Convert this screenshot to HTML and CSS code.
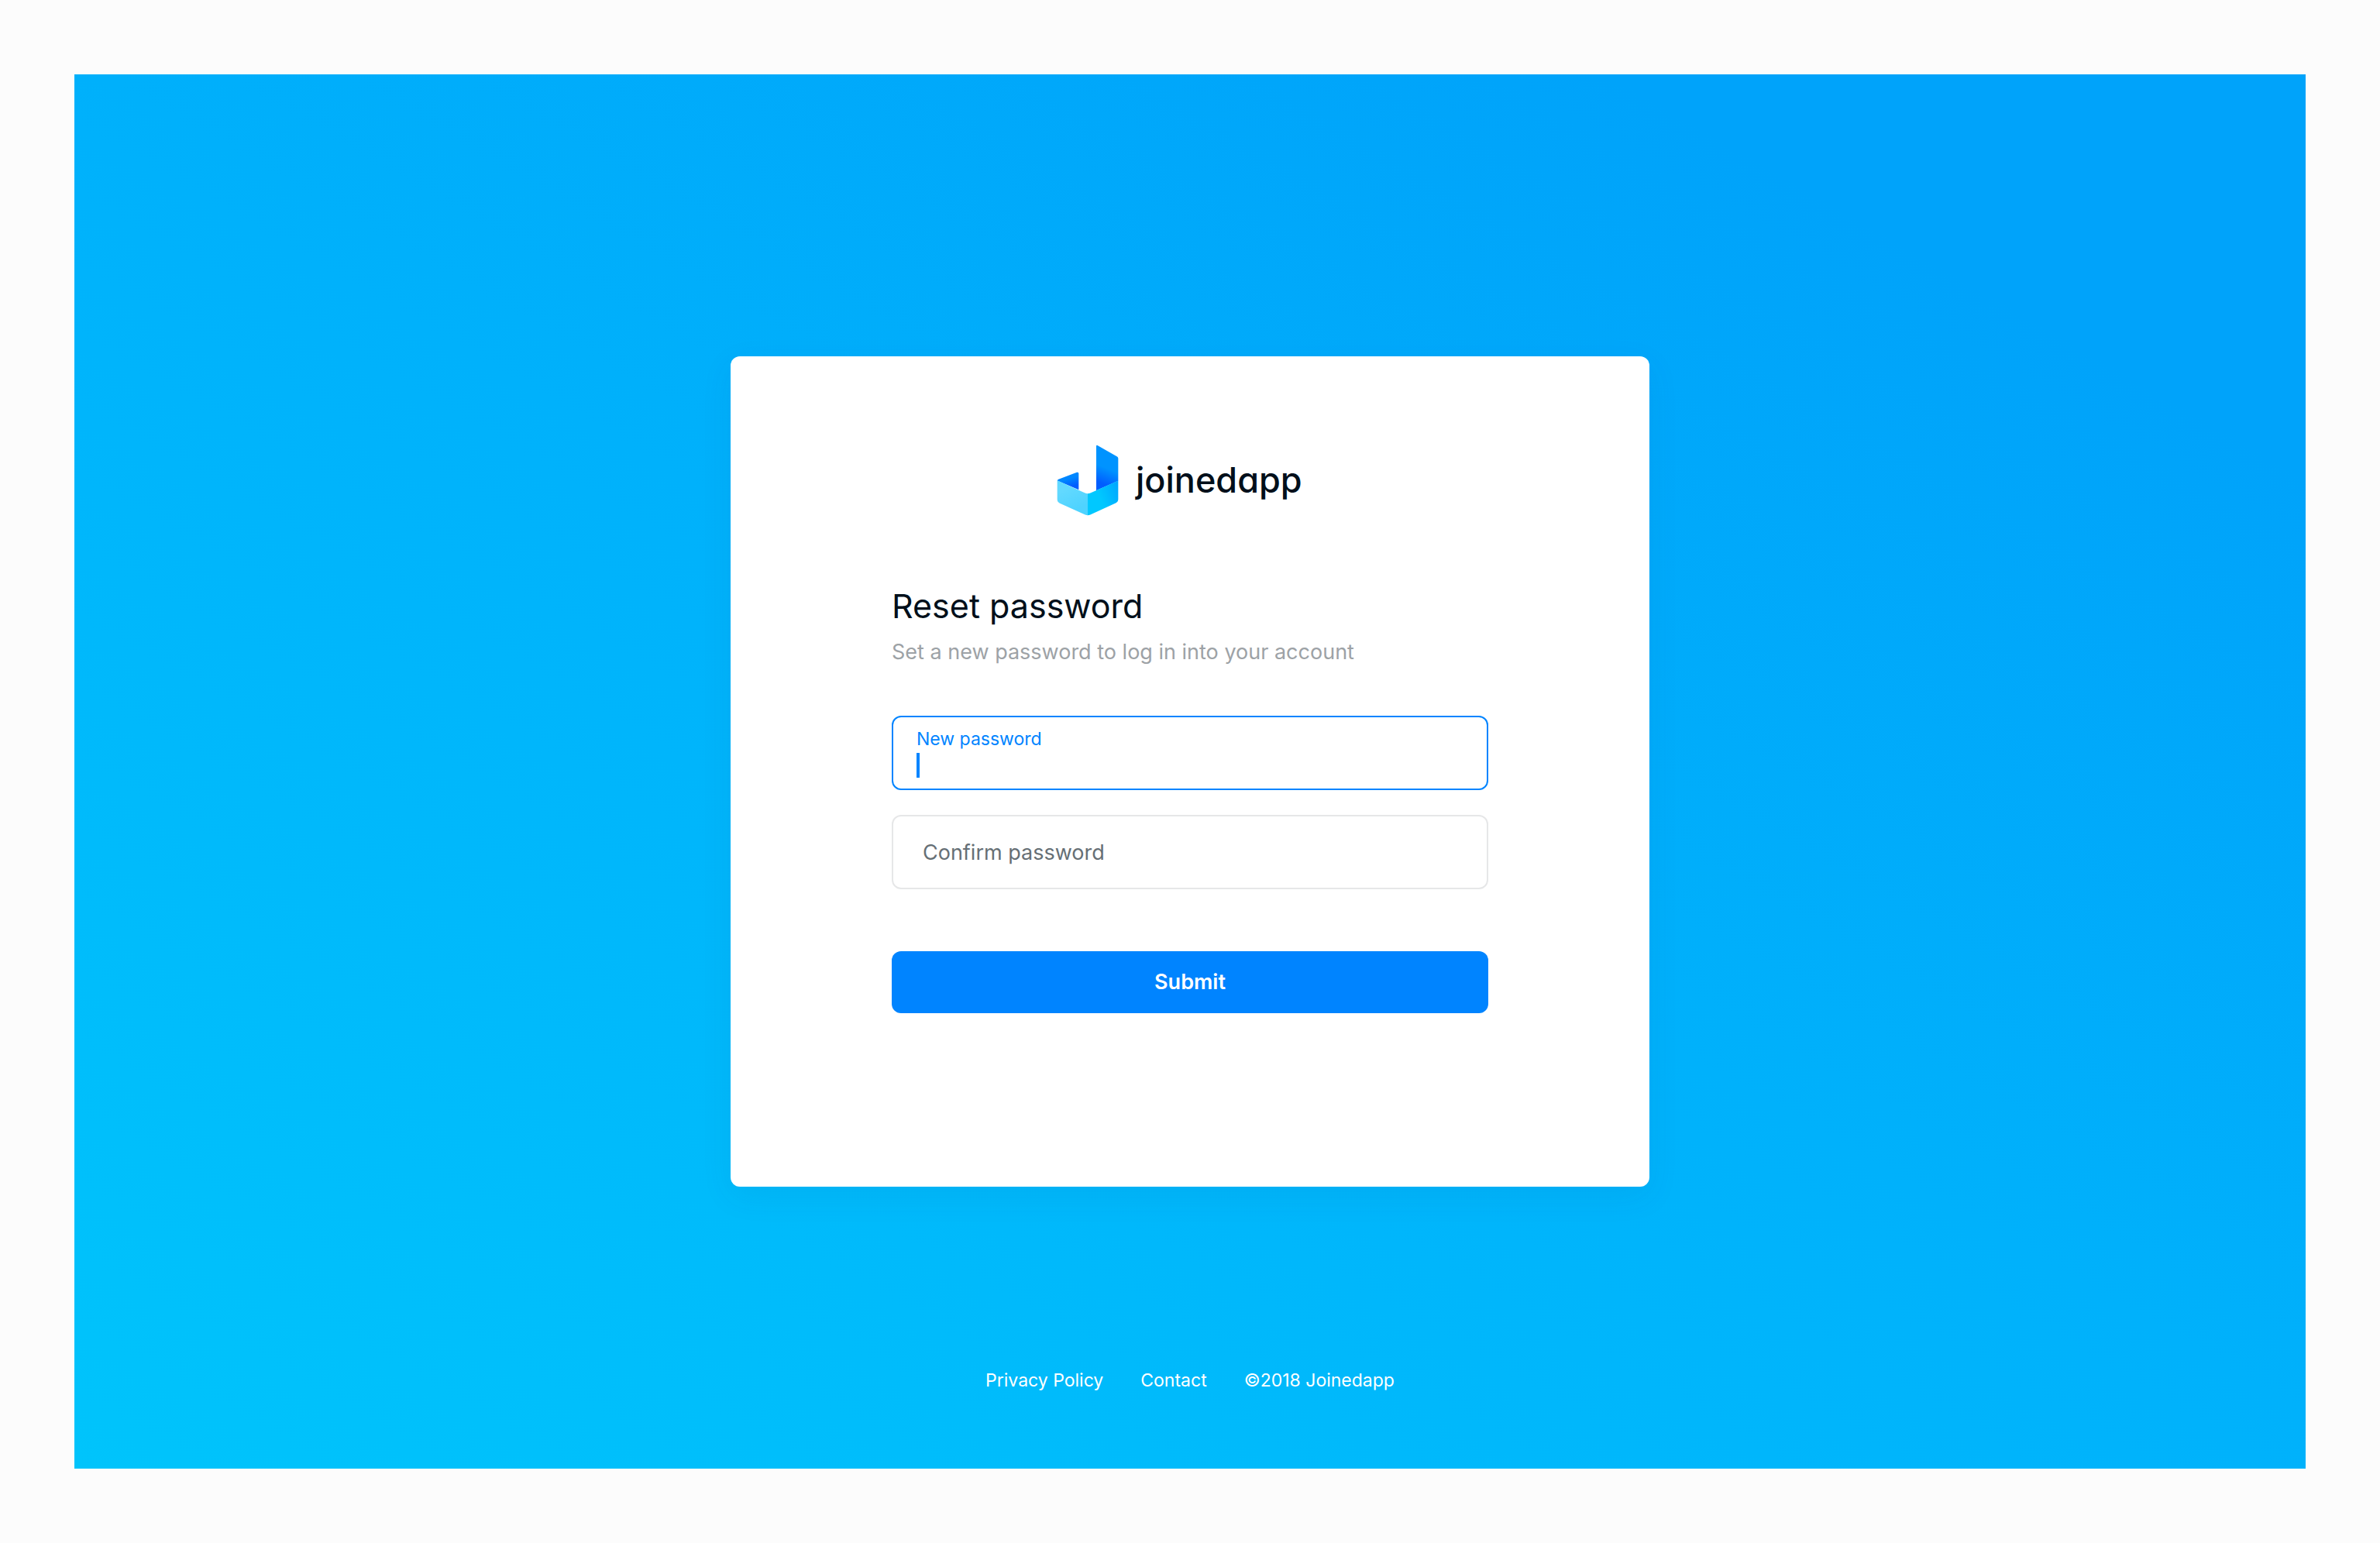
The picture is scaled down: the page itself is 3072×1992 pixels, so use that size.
FILE: index.html
```html
<!DOCTYPE html>
<html lang="en">
<head>
  <meta charset="utf-8">
  <meta name="viewport" content="width=device-width, initial-scale=1">
  <title>Reset password – Joinedapp</title>
  <link rel="stylesheet" href="styles.css">
</head>
<body>
  <div class="screen">
    <main class="card">
      <div class="logo">
        <svg class="logo-mark" viewBox="76 43 240 275" aria-hidden="true">
          <defs>
            <linearGradient id="tall" gradientUnits="userSpaceOnUse" x1="250" y1="200" x2="280" y2="125">
              <stop offset="0.1" stop-color="#005dff"/>
              <stop offset="0.85" stop-color="#0093ff"/>
            </linearGradient>
            <linearGradient id="flap" gradientUnits="userSpaceOnUse" x1="128" y1="206" x2="118" y2="172">
              <stop offset="0" stop-color="#005dff"/>
              <stop offset="0.9" stop-color="#0087ff"/>
            </linearGradient>
            <linearGradient id="left" gradientUnits="userSpaceOnUse" x1="120" y1="210" x2="160" y2="290">
              <stop offset="0" stop-color="#62d9ff"/>
              <stop offset="1" stop-color="#4ed3ff"/>
            </linearGradient>
            <linearGradient id="right" gradientUnits="userSpaceOnUse" x1="220" y1="245" x2="320" y2="205">
              <stop offset="0.2" stop-color="#00c8ff"/>
              <stop offset="1" stop-color="#00a6ff"/>
            </linearGradient>
          </defs>
          <path fill="url(#tall)" d="M229 48q1-5 6-2l75 43q4 3 4 7v87l-85 37z"/>
          <path fill="url(#flap)" d="M78 182q1-3 5-5l71-27q7-2 7 5v62z"/>
          <path fill="url(#left)" d="M78 181l101 46q9 5 17 5v84q-5 0-10-2l-98-44q-10-5-10-15z"/>
          <path fill="url(#right)" d="M314 182l-101 45q-9 5-17 5v84q5 0 10-2l98-45q10-5 10-15z"/>
        </svg>
        <span class="logo-name">joinedapp</span>
      </div>

      <h1 class="title">Reset password</h1>
      <p class="subtitle">Set a new password to log in into your account</p>

      <form class="form">
        <div class="field field-active">
          <label class="field-label" for="new-password">New password</label>
          <input class="field-input" id="new-password" type="password" autocomplete="new-password">
        </div>
        <div class="field">
          <input class="field-input" type="password" placeholder="Confirm password" aria-label="Confirm password" autocomplete="new-password">
        </div>
        <button class="submit" type="submit">Submit</button>
      </form>
    </main>

    <footer class="footer">
      <a class="footer-link" href="#">Privacy Policy</a>
      <a class="footer-link" href="#">Contact</a>
      <span>©2018 Joinedapp</span>
    </footer>
  </div>
</body>
</html>
```

FILE: styles.css
```css
*,
*::before,
*::after {
  box-sizing: border-box;
}

body {
  margin: 0;
  min-height: 100vh;
  padding: 96px;
  display: flex;
  background: #fcfcfc;
  color: #000f1a;
  font-family: Inter, "Liberation Sans", sans-serif;
}

.screen {
  flex: 1;
  display: grid;
  grid-template-rows: 1fr auto 1fr;
  justify-items: center;
  background: linear-gradient(30deg, #00c4fb, #00b1fb 50%, #00a3fa 85%);
}

.card {
  grid-row: 2;
  width: 100%;
  max-width: 1186px;
  padding: 114px 208px 224px;
  border-radius: 12px;
  background: #fff;
  box-shadow: 0 12px 40px rgba(0, 80, 140, 0.08);
}

.logo {
  display: flex;
  align-items: center;
  gap: 22px;
  margin-left: 213px;
}

.logo-mark {
  width: 80px;
  height: 92px;
}

.logo-name {
  font-size: 45px;
  font-weight: 500;
  line-height: 56px;
  font-feature-settings: "cv11";
}

.title {
  margin: 88px 0 0;
  font-size: 43px;
  font-weight: 400;
  line-height: 56px;
}

.subtitle {
  margin: 12px 0 0;
  color: #9da2a6;
  font-size: 27px;
  line-height: 40px;
}

.form {
  display: flex;
  flex-direction: column;
  gap: 32px;
  margin-top: 62px;
}

.field {
  display: flex;
  flex-direction: column;
  height: 96px;
  border: 2px solid #e6e7e8;
  border-radius: 12px;
  padding: 0 38px;
}

.field-active {
  border-color: #0084ff;
  padding: 12px 30px;
}

.field-label {
  color: #0084ff;
  font-size: 23px;
  line-height: 32px;
}

.field-input {
  flex: 1;
  width: 100%;
  min-height: 0;
  padding: 0;
  border: 0;
  outline: 0;
  background: transparent;
  color: inherit;
  font: inherit;
  font-size: 27px;
}

.field-active .field-input {
  background: linear-gradient(#0084ff, #0084ff) 0 2px / 4px 32px no-repeat;
  caret-color: transparent;
}

.field-input::placeholder {
  color: #666f75;
  opacity: 1;
}

.submit {
  height: 80px;
  margin-top: 48px;
  padding: 0 0 2px;
  border: 0;
  border-radius: 12px;
  background: #0084ff;
  color: #fff;
  font: inherit;
  font-size: 27px;
  font-weight: 600;
  cursor: pointer;
}

.footer {
  grid-row: 3;
  align-self: end;
  display: flex;
  gap: 48px;
  padding-bottom: 98px;
  color: #fff;
  font-size: 23px;
  line-height: 32px;
}

.footer-link {
  color: inherit;
  text-decoration: none;
}
```
